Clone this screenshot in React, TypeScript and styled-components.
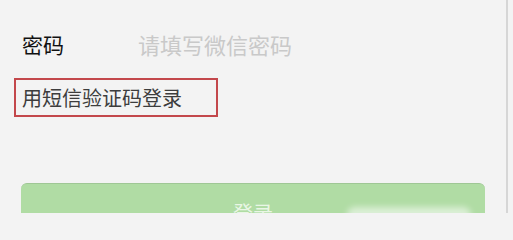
import React from "react";
import styled, { createGlobalStyle } from "styled-components";

const GlobalStyle = createGlobalStyle`
  html, body {
    margin: 0;
    padding: 0;
    background: #f3f3f3;
  }
  body {
    font-family: "Noto Sans CJK SC", "Noto Sans", sans-serif;
  }
`;

const Page = styled.div`
  width: 506px;
  height: 213px;
  background: #f3f3f3;
  border-right: 2px solid #d6d6d6;
  overflow: hidden;
  display: flex;
  flex-direction: column;

  & > * {
    flex-shrink: 0;
  }
`;

const FieldRow = styled.div`
  display: flex;
  align-items: center;
  height: 44px;
  margin-top: 22px;
  padding-left: 22px;
`;

const Label = styled.span`
  width: 116px;
  font-size: 21px;
  color: #111;
`;

const Input = styled.input`
  flex: 1;
  border: none;
  background: transparent;
  outline: none;
  font-family: inherit;
  font-size: 22px;
  color: #222;
  padding: 0;

  &::placeholder {
    color: #c9c9c9;
  }
`;

const SmsLink = styled.a`
  align-self: flex-start;
  margin: 12px 0 0 14px;
  width: 194px;
  height: 35px;
  border: 2px solid #c3474b;
  padding-left: 6px;
  display: flex;
  align-items: center;
  font-size: 20px;
  color: #3d3d3d;
  text-decoration: none;
`;

const ButtonWrap = styled.div`
  position: relative;
  margin: 66px 0 0 21px;
`;

const LoginButton = styled.button`
  width: 464px;
  height: 58px;
  border: none;
  border-top: 1px solid #9fc795;
  border-radius: 6px;
  background: #b0dca4;
  color: #e9f6e5;
  font-family: inherit;
  font-size: 20px;
  padding: 0;
`;

const Watermark = styled.span`
  position: absolute;
  left: 326px;
  top: 24px;
  width: 124px;
  height: 16px;
  border-radius: 8px;
  background: rgba(255, 255, 255, 0.55);
  filter: blur(3px);
`;

export default function App() {
  return (
    <>
      <GlobalStyle />
      <Page>
        <FieldRow>
          <Label>密码</Label>
          <Input type="password" placeholder="请填写微信密码" />
        </FieldRow>
        <SmsLink href="#">用短信验证码登录</SmsLink>
        <ButtonWrap>
          <LoginButton>登录</LoginButton>
          <Watermark />
        </ButtonWrap>
      </Page>
    </>
  );
}
